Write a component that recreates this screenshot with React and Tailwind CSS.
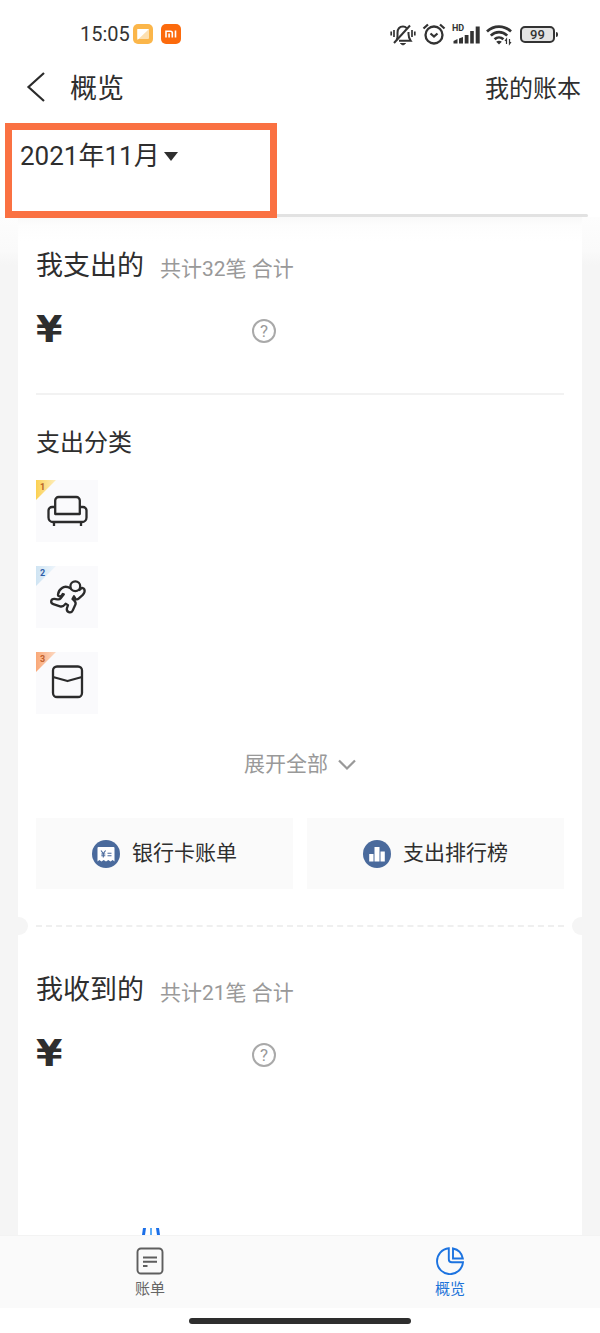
const categories = [
  { rank: 1, name: '家居', ribbon: 'from-[#fbd04f] to-[#fdeebb]', rankColor: 'text-[#b5622a]', Icon: SofaIcon },
  { rank: 2, name: '运动', ribbon: 'from-[#cfe4f3] to-[#eef5fb]', rankColor: 'text-[#2f5da8]', Icon: RunnerIcon },
  { rank: 3, name: '红包', ribbon: 'from-[#f9a878] to-[#fcd9c2]', rankColor: 'text-[#c0602c]', Icon: EnvelopeIcon },
];

function SofaIcon() {
  return (
    <svg viewBox="0 0 62 62" className="w-full h-full" fill="none" stroke="#2b2b2b" strokeWidth="2.3" strokeLinejoin="round">
      <path d="M19.200 34V20.500a3.500 3.500 0 0 1 3.500-3.500h17.600a3.500 3.500 0 0 1 3.500 3.500V34z" />
      <path d="M19 27h-3a3.500 3.500 0 0 0-3.500 3.500v7a4.500 4.500 0 0 0 4.500 4.500h29a4.500 4.500 0 0 0 4.500-4.500v-7A3.500 3.500 0 0 0 47 27h-3" />
      <path d="M18 42v4M45 42v4" />
    </svg>
  );
}

function RunnerIcon() {
  return (
    <svg viewBox="0 0 62 62" className="w-full h-full" fill="none" stroke="#2b2b2b" strokeWidth="2.300" strokeLinejoin="round" strokeLinecap="round">
      <circle cx="39.300" cy="20.300" r="4.900" />
      <path d="M34.500 22.300C31.500 20.500 28 20.500 26 22C23.800 23.500 22.300 26 22 28.300C21.800 30.600 24.800 31.200 26 29.200L26.800 28L27.800 28.300L24.500 32.600C23.800 33.400 22.600 33.600 21.300 33.300L18.500 32.900C14.700 32.700 14 37 17.300 38.100L24 40.300C26.200 40.900 27.600 40.200 28.800 38.600L29.600 37.600L32 39.200L30.900 42.300C30 46.300 35 47.800 36.700 44.500L39.400 38.600C40 37 39.600 35.900 38.300 34.800L36.500 33L38 30.300L39.200 32.300C40 33.700 41.400 33.800 42.600 32.700L46.800 28.900C48.500 27.100 49 25.200 48.400 23.500C47.800 21.800 46 21.600 44.900 22.600L43.500 24" />
    </svg>
  );
}

function EnvelopeIcon() {
  return (
    <svg viewBox="0 0 62 62" className="w-full h-full" fill="none" stroke="#2b2b2b" strokeWidth="2.300" strokeLinejoin="round">
      <rect x="17" y="14.500" width="29" height="30.500" rx="4" />
      <path d="M17 25l14.500 4L46 25" />
    </svg>
  );
}

function BankBillIcon() {
  return (
    <svg viewBox="0 0 28 28" className="w-7 h-7 shrink-0" fill="none">
      <circle cx="14" cy="14" r="14" fill="#4a6a9c" />
      <path d="M5.500 8q0-1 1-1h15q1 0 1 1v13.500l-1.800-1.500-2.200 1.500-2.200-1.500-2.300 1.500-2.300-1.500-2.200 1.500-2.200-1.500-1.800 1.500z" fill="#fff" />
      <path d="M9 10.500l2.300 3 2.300-3M11.300 13.500v4M9.300 14h4M9.300 15.800h4M15.500 13.300h4M15.500 15.800h4" stroke="#4a6a9c" strokeWidth="1.100" />
    </svg>
  );
}

function RankingIcon() {
  return (
    <svg viewBox="0 0 28 28" className="w-7 h-7 shrink-0">
      <circle cx="14" cy="14" r="14" fill="#4a6a9c" />
      <path d="M6.200 14h4.300v7.500H6.200zM11.500 7h5v14.500h-5zM17.500 11.500h4.300v10h-4.300z" fill="#fff" />
    </svg>
  );
}

function StatusBar() {
  return (
    <div className="flex items-center justify-between h-16 pl-20 pr-[42px] pt-1">
      <div className="flex items-center">
        <span className="text-[20px] leading-6 text-[#333] w-[53px]">15:05</span>
        <svg viewBox="0 0 20 20" className="w-5 h-5">
          <rect width="20" height="20" rx="5" fill="#fbb64a" />
          <rect x="4" y="5" width="12" height="10" rx="1" fill="#fde0b0" />
          <path d="M4.500 5h11.500L4.500 16z" fill="#fff" />
        </svg>
        <svg viewBox="0 0 20 20" className="w-5 h-5 ml-2">
          <rect width="20" height="20" rx="5" fill="#fc6a0c" />
          <path d="M5 13.500V7.300h4.500q1.800 0 1.800 1.800v4.400M8.100 9.500v4M14.500 6.500v7" fill="none" stroke="#fff" strokeWidth="1.600" />
        </svg>
      </div>

      <div className="flex items-center">
        {/* Muted bell */}
        <svg viewBox="0 0 26 24" className="w-[26px] h-6" fill="none" stroke="#333" strokeWidth="2">
          <path d="M6.500 18C8 16 7.500 14 7.500 11c0-4 2.200-6.500 5.500-6.500 1.500 0 2.800.6 3.700 1.600M18.500 10v2c0 3 .6 4.500 2.200 6.800H9" />
          <path d="M4 21L20 3.500" />
          <path d="M10.500 21.500h5l-2.500 1.500z" fill="#333" strokeWidth="1" />
          <path d="M1.200 9.500v4M4 8v7M22 8v7M24.800 9.500v4" strokeWidth="1.700" />
        </svg>
        {/* Alarm */}
        <svg viewBox="0 0 24 24" className="w-6 h-6 ml-1.5" fill="none" stroke="#333" strokeWidth="2.300">
          <circle cx="12" cy="13" r="8.500" />
          <path d="M1.500 6.500L6 2.500M22.500 6.500L18 2.500M8.500 11.500l3.500 3 3.500-3" />
        </svg>
        {/* Signal */}
        <span className="relative ml-1.5 w-7 h-6">
          <span className="absolute left-0 top-0 text-[9px] leading-3 font-bold text-[#333]">HD</span>
          <svg viewBox="0 0 28 24" className="w-7 h-6" fill="#333">
            <path d="M1.500 19l4-2v4.500h-4zM7 16.500l4-1.500v6.500H7zM12.700 13h3.800v8.500h-3.800zM18.200 9h3.600v12.500h-3.600zM23.700 4.500h4v17h-4z" />
          </svg>
        </span>
        <svg viewBox="0 0 26 24" className="w-[26px] h-6 ml-1.5" fill="none" stroke="#333" strokeWidth="2.700">
          <path d="M1 9.500c6.800-6.600 17.200-6.600 24 0M4.800 13.600c4.700-4.600 11.700-4.600 16.400 0M8.600 17.300c2.500-2.400 6.300-2.400 8.800 0" />
          <path d="M13 22.500l-2.800-2.800q2.800-2 5.600 0z" fill="#333" stroke="none" />
          <path d="M20.500 22v-5l-1.500 2M23.500 17v5l1.500-2" strokeWidth="1.200" />
        </svg>
        <span className="flex items-center ml-2">
          <span className="flex items-center justify-center w-[35px] h-[17px] rounded-[5px] border-2 border-[#333] bg-[#e4e4e4] text-[13px] leading-none font-medium text-[#333]">99</span>
          <span className="w-[2px] h-[5px] ml-px rounded-r bg-[#333]" />
        </span>
      </div>
    </div>
  );
}

function SummaryHeader({ title, count }) {
  return (
    <>
      <div className="flex items-center h-10">
        <h2 className="pt-0.5 text-[27px] leading-10">{title}</h2>
        <p className="ml-4 pt-2 text-[21px] leading-9 text-[#999]">共计{count}笔 合计</p>
      </div>
      <div className="flex items-center mt-5 h-12">
        <span className="w-[216px] text-[38px] leading-[48px] font-bold font-[family-name:'DejaVu_Sans',sans-serif]">¥</span>
        <button type="button" aria-label="说明" className="w-6 h-6 mt-1 rounded-full border-2 border-[#a9a9a9] flex items-center justify-center text-[17px] leading-none text-[#999]">
          ?
        </button>
      </div>
    </>
  );
}

function App() {
  return (
    <div className="min-h-screen flex flex-col bg-white text-[#2e2e2e] font-[family-name:Roboto,'Noto_Sans_CJK_SC',sans-serif]">
      <StatusBar />

      <header className="flex items-center justify-between h-12 pl-6 pr-[19px]">
        <div className="flex items-center">
          <button type="button" aria-label="返回" className="w-[22px] h-8">
            <svg viewBox="0 0 22 32" className="w-full h-full" fill="none" stroke="#2b2b2b" strokeWidth="2.200">
              <path d="M20 1L4.500 15l15.500 14" />
            </svg>
          </button>
          <h1 className="ml-6 pt-0.5 text-[27px] leading-10">概览</h1>
        </div>
        <a href="#book" className="pt-0.5 text-[24px] leading-9">我的账本</a>
      </header>

      {/* Month picker */}
      <div className="relative z-10 ml-[5px] mt-[11px] -mb-1 w-[272px] h-[95px] border-[7px] border-[#fa7142] px-2 pt-1.5">
        <button type="button" className="flex items-center text-[26px] leading-10">
          2021年11月
          <svg viewBox="0 0 14 9" className="w-3.5 h-[9px] ml-1" fill="#2e2e2e">
            <path d="M0 0h14L7 9z" />
          </svg>
        </button>
      </div>
      <div className="mx-3 h-[3px] rounded-full bg-[#e2e2e2]" />

      <main className="flex-1 px-[18px] bg-[linear-gradient(to_bottom,#fdfdfd_0,#fafafa_34px,#f5f5f5_48px)]">
        <section className="px-[18px] pt-7 pb-7 bg-[linear-gradient(to_bottom,#f9f9f9_0,#fdfdfd_8px,#ffffff_24px)]">
          <SummaryHeader title="我支出的" count={32} />

          <div className="mt-10 h-0.5 bg-[#f2f2f2]" />

          <h3 className="mt-8 text-[24px] leading-8">支出分类</h3>
          <ul className="flex flex-col gap-6 mt-[21px]">
            {categories.map(({ rank, name, ribbon, rankColor, Icon }) => (
              <li key={rank} aria-label={name} className="relative w-[62px] h-[62px] bg-[#fafafc]">
                <span className={`absolute left-0 top-0 w-5 h-5 bg-linear-to-r [clip-path:polygon(0_0,100%_0,0_100%)] ${ribbon}`} />
                <span className={`absolute left-1 top-0.5 text-[9px] leading-[10px] font-bold ${rankColor}`}>{rank}</span>
                <Icon />
              </li>
            ))}
          </ul>

          <button type="button" className="flex items-center mt-[34px] mx-auto text-[21px] leading-8 text-[#999]">
            展开全部
            <svg viewBox="0 0 18 12" className="w-[18px] h-3 ml-2.5 mt-0.5" fill="none" stroke="#999" strokeWidth="2.200">
              <path d="M1 1.500l8 8 8-8" />
            </svg>
          </button>

          <div className="grid grid-cols-2 gap-3.5 mt-[38px]">
            <button type="button" className="flex items-center justify-center gap-3 h-[71px] bg-[#fafafa] text-[21px]">
              <BankBillIcon />
              银行卡账单
            </button>
            <button type="button" className="flex items-center justify-center gap-3 h-[71px] bg-[#fafafa] text-[21px]">
              <RankingIcon />
              支出排行榜
            </button>
          </div>
        </section>

        {/* Ticket-style tear line */}
        <div className="flex items-center justify-between h-[18px] bg-white">
          <span className="w-2.5 h-full rounded-r-full bg-[#f5f5f5]" />
          <span className="flex-1 mx-2 border-t-2 border-dashed border-[#efefef]" />
          <span className="w-2.5 h-full rounded-l-full bg-[#f5f5f5]" />
        </div>

        <section className="px-[18px] pt-[34px] bg-white">
          <SummaryHeader title="我收到的" count={21} />
          <svg viewBox="0 0 20 7" className="block w-5 h-[7px] mt-[151px] ml-[105px]" aria-hidden="true">
            <path d="M2 0h3L4 7H1zM15 0h3l1 7h-3z" fill="#1b6fe8" />
            <path d="M9 0h2v7H9z" fill="#5aa9f5" />
          </svg>
        </section>
      </main>

      <nav className="flex h-[73px] border-t border-[#f3f3f3] bg-[#fafafa] text-[15px] leading-5">
        <button type="button" className="flex-1 flex flex-col items-center pt-[11px] text-[#666]">
          <svg viewBox="0 0 28 28" className="w-7 h-7 mb-1" fill="none" stroke="#5e5e5e" strokeWidth="1.900">
            <rect x="1.500" y="1.500" width="25" height="25" rx="3.500" />
            <path d="M7 10.500h14M7 14.800h14M7 19h4.500" />
          </svg>
          账单
        </button>
        <button type="button" aria-current="page" className="flex-1 flex flex-col items-center pt-[11px] text-[#1c73d8]">
          <svg viewBox="0 0 28 28" className="w-7 h-7 mb-1" fill="none" stroke="#1c73e0" strokeWidth="1.900">
            <path d="M12.800 1.200A13 13 0 1 0 27 15.200H15.800a3 3 0 0 1-3-3z" />
            <path d="M17 1.500V11.500h9.800A12.500 12.500 0 0 0 17 1.500z" />
          </svg>
          概览
        </button>
      </nav>
      <div className="flex justify-center pt-2.5 pb-[9px]">
        <span className="w-[222px] h-1.5 rounded-full bg-[#2e2e2e]" />
      </div>
    </div>
  );
}

export default App;
